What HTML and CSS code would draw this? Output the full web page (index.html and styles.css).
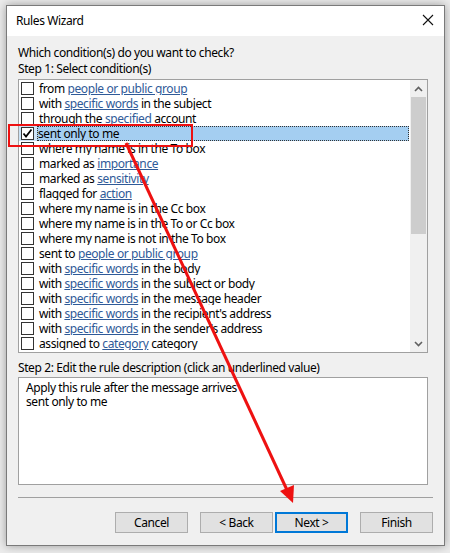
FILE: index.html
```
<!DOCTYPE html>
<html>
<head>
<meta charset="utf-8">
<link rel="stylesheet" href="styles.css">
</head>
<body>
<div class="window">
  <div class="titlebar">
    <span class="title">Rules Wizard</span>
    <svg class="close" width="12" height="12" viewBox="0 0 12 12"><path d="M1 1 L11 11 M11 1 L1 11" stroke="#111" stroke-width="1.1" fill="none"/></svg>
  </div>
  <div class="content">
    <div class="label">Which condition(s) do you want to check?</div>
    <div class="label">Step 1: Select condition(s)</div>
    <div class="listbox">
      <div class="rows">
        <div class="row"><span class="cell"><span class="chk"></span></span><span class="txt">from <u class="lnk">people or public group</u></span></div>
        <div class="row"><span class="cell"><span class="chk"></span></span><span class="txt">with <u class="lnk">specific words</u> in the subject</span></div>
        <div class="row"><span class="cell"><span class="chk"></span></span><span class="txt">through the <u class="lnk">specified</u> account</span></div>
        <div class="row sel"><span class="cell"><span class="chk"><svg width="11" height="11" viewBox="0 0 11 11"><path d="M1.5 5.5 L4 8.5 L9.5 1.5" stroke="#000" stroke-width="1.8" fill="none"/></svg></span></span><span class="txt">sent only to me</span></div>
        <div class="row"><span class="cell"><span class="chk"></span></span><span class="txt">where my name is in the To box</span></div>
        <div class="row"><span class="cell"><span class="chk"></span></span><span class="txt">marked as <u class="lnk">importance</u></span></div>
        <div class="row"><span class="cell"><span class="chk"></span></span><span class="txt">marked as <u class="lnk">sensitivity</u></span></div>
        <div class="row"><span class="cell"><span class="chk"></span></span><span class="txt">flagged for <u class="lnk">action</u></span></div>
        <div class="row"><span class="cell"><span class="chk"></span></span><span class="txt">where my name is in the Cc box</span></div>
        <div class="row"><span class="cell"><span class="chk"></span></span><span class="txt">where my name is in the To or Cc box</span></div>
        <div class="row"><span class="cell"><span class="chk"></span></span><span class="txt">where my name is not in the To box</span></div>
        <div class="row"><span class="cell"><span class="chk"></span></span><span class="txt">sent to <u class="lnk">people or public group</u></span></div>
        <div class="row"><span class="cell"><span class="chk"></span></span><span class="txt">with <u class="lnk">specific words</u> in the body</span></div>
        <div class="row"><span class="cell"><span class="chk"></span></span><span class="txt">with <u class="lnk">specific words</u> in the subject or body</span></div>
        <div class="row"><span class="cell"><span class="chk"></span></span><span class="txt">with <u class="lnk">specific words</u> in the message header</span></div>
        <div class="row"><span class="cell"><span class="chk"></span></span><span class="txt">with <u class="lnk">specific words</u> in the recipient's address</span></div>
        <div class="row"><span class="cell"><span class="chk"></span></span><span class="txt">with <u class="lnk">specific words</u> in the sender's address</span></div>
        <div class="row"><span class="cell"><span class="chk"></span></span><span class="txt">assigned to <u class="lnk">category</u> category</span></div>
      </div>
      <div class="scrollbar">
        <div class="sbtn"><svg width="9" height="6" viewBox="0 0 9 6"><path d="M1 5 L4.5 1.5 L8 5" stroke="#606060" stroke-width="1.6" fill="none"/></svg></div>
        <div class="thumb"></div>
        <div class="track"></div>
        <div class="sbtn"><svg width="9" height="6" viewBox="0 0 9 6"><path d="M1 1 L4.5 4.5 L8 1" stroke="#606060" stroke-width="1.6" fill="none"/></svg></div>
      </div>
    </div>
    <div class="label step2">Step 2: Edit the rule description (click an underlined value)</div>
    <div class="desc">
      <div>Apply this rule after the message arrives</div>
      <div>sent only to me</div>
    </div>
    <div class="sep"></div>
    <div class="buttons">
      <button class="btn">Cancel</button>
      <button class="btn back">&lt; Back</button>
      <button class="btn next">Next &gt;</button>
      <button class="btn finish">Finish</button>
    </div>
  </div>
</div>
<svg class="annot" width="450" height="553" viewBox="0 0 450 553">
  <rect x="9" y="125" width="183" height="21" fill="none" stroke="#ee1111" stroke-width="2"/>
  <line x1="126" y1="143" x2="287" y2="490" stroke="#ee1111" stroke-width="3"/>
  <polygon points="293,503 280,491 294,485" fill="#ee1111"/>
</svg>
</body>
</html>
```
FILE: styles.css
```
* { box-sizing: border-box; }
html, body { margin: 0; padding: 0; }
body {
  width: 450px;
  height: 553px;
  background: #ececec;
  font-family: "Noto Sans", "Liberation Sans", sans-serif;
  font-size: 12px;
  letter-spacing: -0.4px;
  color: #000;
  position: relative;
  overflow: hidden;
  padding-top: 5px;
  padding-left: 6px;
}
.window {
  width: 439px;
  height: 541px;
  border: 1px solid #7a7a7a;
  background: #f0f0f0;
  box-shadow: 0 0 9px rgba(0,0,0,0.35);
}
.titlebar {
  height: 30px;
  background: #fff;
  display: flex;
  align-items: center;
  justify-content: space-between;
  padding: 0 10px 0 9px;
}
.title { font-size: 12px; line-height: 16px; }
.close { margin-top: -2px; }
.content { padding: 9px 10px 0 11px; }
.label { line-height: 16px; white-space: nowrap; }
.listbox {
  margin-top: 2px;
  width: 410px;
  height: 274px;
  border: 1px solid #a0a0a0;
  background: #fff;
  display: flex;
}
.rows { flex: 1; padding-top: 1px; min-width: 0; }
.row { height: 15px; display: flex; align-items: stretch; }
.cell { width: 18px; display: flex; align-items: center; padding-left: 2px; }
.chk {
  width: 13px; height: 13px;
  border: 1px solid #333;
  background: #fff;
  display: flex; align-items: center; justify-content: center;
}
.txt {
  display: block;
  flex: 1;
  margin-right: 1px;
  padding-left: 1px;
  line-height: 13px;
  white-space: nowrap;
  overflow: hidden;
  border: 1px solid transparent;
}
.lnk { color: #2f5a98; text-decoration: underline; }
.row.sel .cell { background: #cce4f7; }
.row.sel .txt { background: #a4cef1; border: 1px dotted #333; padding-left: 0; }
.scrollbar {
  width: 17px;
  background: #f0f0f0;
  display: flex;
  flex-direction: column;
}
.sbtn { height: 17px; display: flex; align-items: center; justify-content: center; }
.thumb { height: 137px; background: #cdcdcd; margin: 0 1px; }
.track { flex: 1; }
.step2 { margin-top: 7px; }
.desc {
  margin-top: 1px;
  width: 410px;
  height: 108px;
  border: 1px solid #a0a0a0;
  background: #fff;
  padding: 3px 7px;
  line-height: 14px;
}
.sep {
  margin-top: 12px;
  width: 415px;
  height: 1px;
  background: #a0a0a0;
}
.buttons {
  margin-top: 14px;
  width: 415px;
  display: flex;
  justify-content: flex-end;
}
.btn {
  width: 73px;
  height: 21px;
  background: #e1e1e1;
  border: 1px solid #adadad;
  font-family: inherit;
  font-size: 12px;
  letter-spacing: -0.4px;
  color: #000;
  padding: 0;
  margin: 0;
  border-radius: 0;
}
.back { margin-left: 12px; }
.next { margin-left: 2px; border: 2px solid #0078d7; }
.finish { margin-left: 12px; }
.annot { position: absolute; left: 0; top: 0; pointer-events: none; }
```
